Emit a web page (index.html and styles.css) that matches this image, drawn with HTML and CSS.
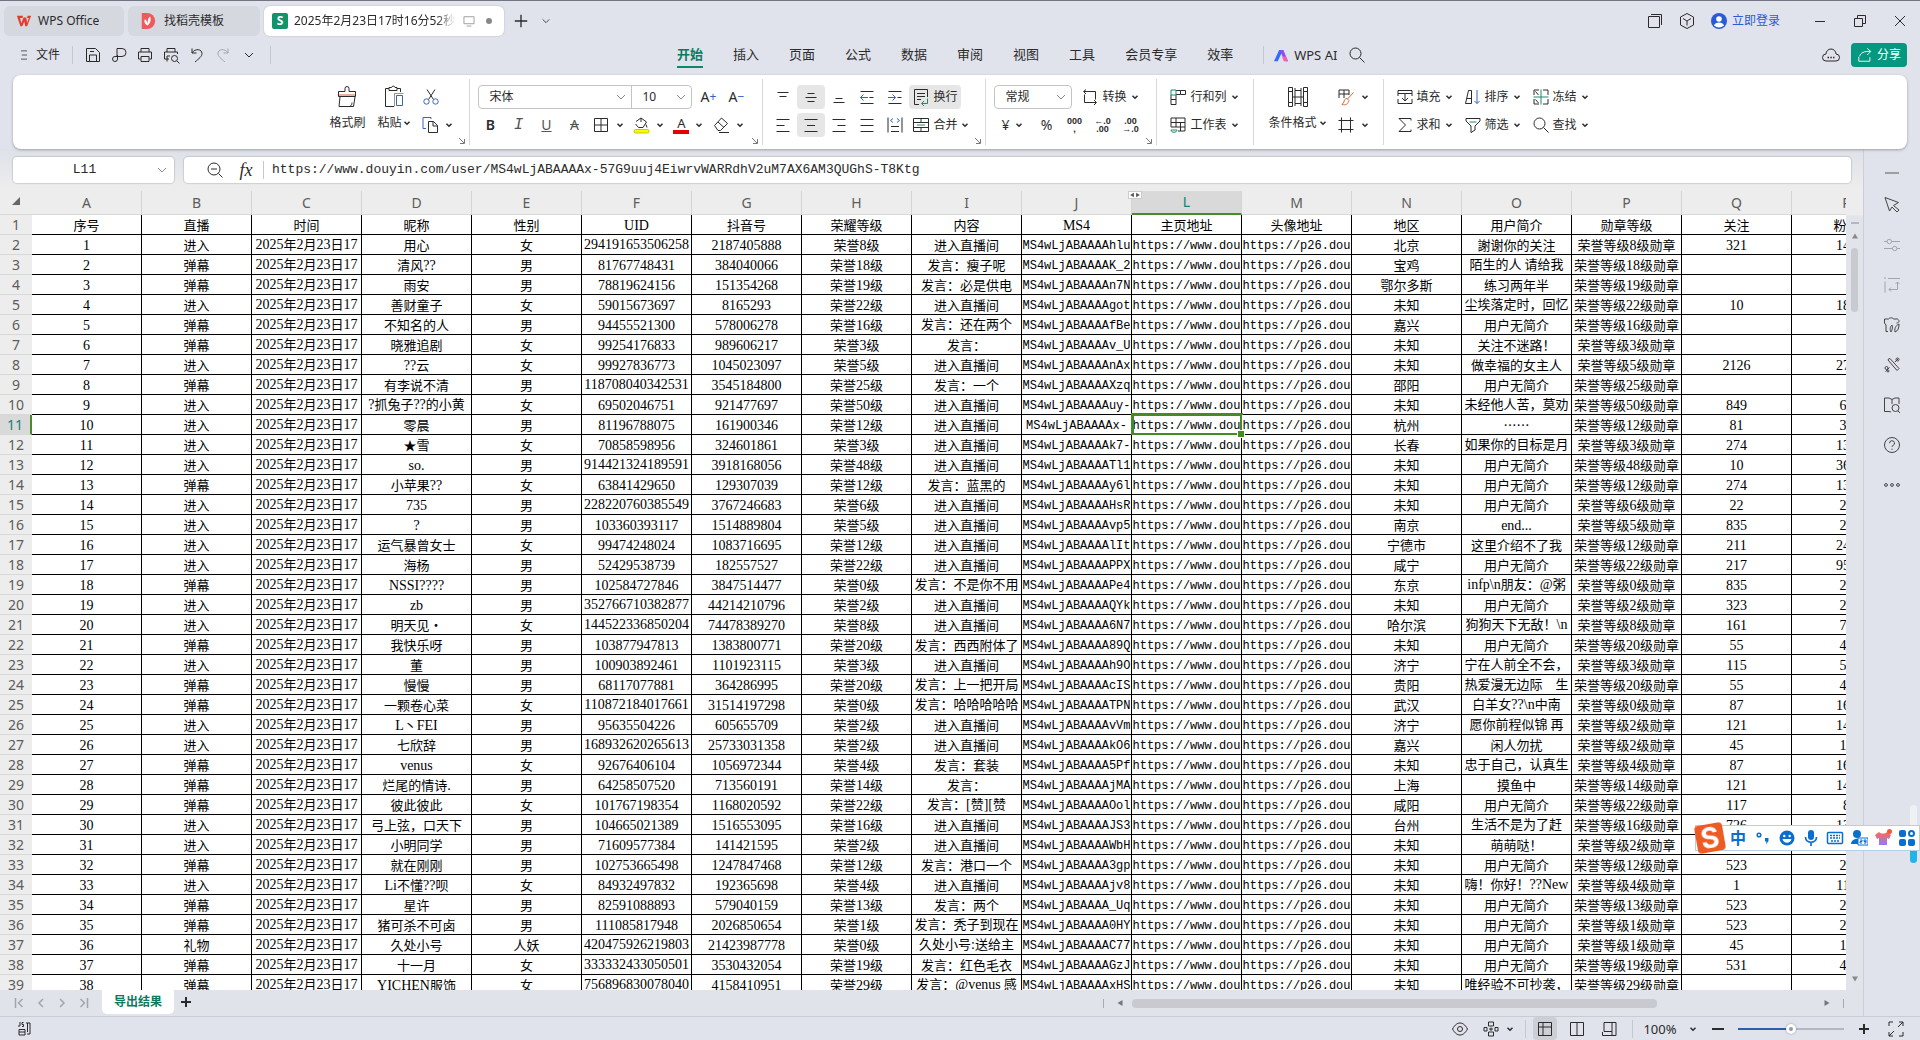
FILE: index.html
```html
<!DOCTYPE html>
<html lang="zh-CN">
  <head>
    <meta charset="UTF-8" />
    <meta name="viewport" content="width=device-width, initial-scale=1.0" />
    <title>WPS Office</title>
    <link rel="stylesheet" href="styles.css">
  </head>
  <body>
    <!-- 图标库 -->
    <svg class="sprite" xmlns="http://www.w3.org/2000/svg">
      <symbol id="caret" viewBox="0 0 8 8"><path d="M1.5 2.8 4 5.2 6.5 2.8" stroke-width="1.5" /></symbol>
      <symbol id="chevron" viewBox="0 0 12 12"><path d="M2 4l4 4 4-4" /></symbol>
      <symbol id="menu" viewBox="0 0 12 16"><path d="M2 2.500h8M3 8h7M2 13.500h8" /></symbol>
      <symbol id="save" viewBox="0 0 18 18"><path d="M2.500 2.500h9l4 4v9h-13zM5.500 15v-6h7v6M6 5.500h4" /></symbol>
      <symbol id="pdf" viewBox="0 0 18 18"><path d="M7 11V2.500h5a4 4 0 0 1 0 8H5a2.500 2.500 0 1 0 2.500 2.500V9" /></symbol>
      <symbol id="print" viewBox="0 0 18 18"><path d="M5 6V2.500h8V6M4.500 13h-2V6h13v7h-2M5 10.500h8v5H5z" /></symbol>
      <symbol id="preview" viewBox="0 0 18 18"><path d="M5 6V2.500h8V6M7 13H2.500V6h13v2M5 15.500V10h3M15 15l2.500 2.500" /><circle cx="12.500" cy="12.500" r="3" /></symbol>
      <symbol id="undo" viewBox="0 0 18 18"><path d="M4 2.500V7h4.500M4 7c3-5 10-4 10 .5 0 3-3 5-7 8.500" /></symbol>
      <symbol id="redo" viewBox="0 0 18 18"><path d="M14 2.500V7H9.500M14 7C11 2 4 3 4 7.500c0 3 3 5 7 8.500" /></symbol>
      <symbol id="search" viewBox="0 0 18 18"><circle cx="7.500" cy="7.500" r="5.500" /><path d="M11.500 11.500l5 5" /></symbol>
      <symbol id="zoomout" viewBox="0 0 18 18"><circle cx="8" cy="8" r="6" /><path d="M5 8h6M12.500 12.500l4 4" /></symbol>
      <symbol id="brush" viewBox="0 0 24 24"><path d="M3.500 6.500v5h17v-5H14V3.500a2 2 0 0 0-4 0v3zM5 12l-1 9.500h14.500L20 12M15 21.500c1.500-1 2-2.500 2-4" /><path class="warm" d="M4 10h16" /></symbol>
      <symbol id="paste" viewBox="0 0 24 24"><path d="M7 3.500H3.500v18H12M15 3.500h3.500V7M7 5.500v-3h2.500a1.800 1.800 0 0 1 3.500 0H15v3z" /><path class="blue" d="M14.500 10.500h6v10h-6z" /><path d="M12.500 21.500v-13h9" opacity=".5" /></symbol>
      <symbol id="cut" viewBox="0 0 18 18"><path d="M5 1.500l6.500 10M13 1.500l-6.500 10" /><circle class="blue" cx="4.500" cy="13.500" r="2.700" /><circle class="blue" cx="13.500" cy="13.500" r="2.700" /></symbol>
      <symbol id="copy" viewBox="0 0 18 18"><path class="blue" d="M5 12.500H2v-11h8V3" /><path d="M7.500 5.500h5l4 4v7h-9zM12 5.500V10h4.500" /></symbol>
      <symbol id="borders" viewBox="0 0 18 18"><path d="M2.500 2.500h13v13h-13zM9 2.500v13M2.500 9h13" /></symbol>
      <symbol id="fill" viewBox="0 0 18 18"><path d="M4 5.500 9 2l5.500 4-3.500 5.500H6.500L3.500 8M9 2v4" /><path d="M14 8.500l1 3" /><rect x="2" y="13.500" width="15" height="3.500" rx="1.500" fill="#fbfb00" stroke="#b9b900" stroke-width=".8" /></symbol>
      <symbol id="eraser" viewBox="0 0 18 18"><path d="M2.500 9.500 9.500 2l6 5.500-7 7H6zM6 6l6 5.500M7 16.500h10" /></symbol>
      <symbol id="al-top" viewBox="0 0 18 18"><path d="M3.500 4.500h11M5.500 8.500h7" /></symbol>
      <symbol id="al-mid" viewBox="0 0 18 18"><path d="M5.500 5.500h7M3.500 9.500h11M5.500 13.500h7" /></symbol>
      <symbol id="al-bot" viewBox="0 0 18 18"><path d="M5.500 10.500h7M3.500 14.500h11" /></symbol>
      <symbol id="outdent" viewBox="0 0 18 18"><path d="M2.500 3.500h13M11.500 9.500h4M2.500 15.500h13" /><path class="blue" d="M10 9.500H2.500M5.500 6.500l-3 3 3 3" /></symbol>
      <symbol id="indent" viewBox="0 0 18 18"><path d="M2.500 3.500h13M11.500 9.500h4M2.500 15.500h13" /><path class="blue" d="M2 9.500h7.500M6.500 6.500l3 3-3 3" /></symbol>
      <symbol id="wrap" viewBox="0 0 18 18"><path d="M7 16.500H2.500v-15h13V9M5 5.500h8M5 8.500h8M5 11.500h4" /><path class="green" d="M15.500 10.500v5H10M12 13l-2.500 2.500L12 18" /></symbol>
      <symbol id="al-left" viewBox="0 0 18 18"><path d="M2.500 3.500h13M2.500 9.500h8M2.500 15.500h13" /></symbol>
      <symbol id="al-center" viewBox="0 0 18 18"><path d="M2.500 3.500h13M5 9.500h8M2.500 15.500h13" /></symbol>
      <symbol id="al-right" viewBox="0 0 18 18"><path d="M2.500 3.500h13M7.500 9.500h8M2.500 15.500h13" /></symbol>
      <symbol id="al-full" viewBox="0 0 18 18"><path d="M2.500 3.500h13M2.500 9.500h13M2.500 15.500h13" /></symbol>
      <symbol id="distribute" viewBox="0 0 18 18"><path d="M2 1.500v15M16 1.500v15M5 10.500h8M5 15.500h8" /><path class="blue" d="M7 2.500l-2.500 2L7 6.500M11 2.500l2.500 2-2.500 2" /></symbol>
      <symbol id="merge" viewBox="0 0 18 18"><path d="M1.500 2.500h15v13h-15zM1.500 6.500h15M1.500 11.500h15M9 2.500v4M9 11.500v4" /><path class="green" d="M5 9h8" /></symbol>
      <symbol id="convert" viewBox="0 0 18 18"><path d="M5 1.500 2.500 3.500 5 6M3 3.500h11.500v8M13 17l2.500-2.500L13 12M15 14.500H3.500v-8" /></symbol>
      <symbol id="rowcol" viewBox="0 0 18 18"><path d="M7 2.500h4.500v4H7M11.500 2.500h5v4h-5M2 7v9.500h5V7M2 11.500h5" /><path class="green" d="M2 2h5v5H2z" /></symbol>
      <symbol id="sheet" viewBox="0 0 18 18"><path d="M2 11V2h14v13H9M2 6.500h14M7 2v9M11.500 6.500V15M2 11h14" /><path class="green" d="M2 14h6c0 3-6 3-6 0z" /></symbol>
      <symbol id="condfmt" viewBox="0 0 24 24"><path d="M2.500 2.500h4v4h-4zM2.500 6.500h4v11h-4zM2.500 17.500h4v4h-4zM17.500 2.500h4v4h-4zM17.500 6.500h4v11h-4zM17.500 17.500h4v4h-4zM9 3v18M15 3v18M9 5.500h6M9 12h6M9 18.500h6M6.500 12H9M15 12h2.500" /></symbol>
      <symbol id="cellstyle" viewBox="0 0 18 18"><path d="M2 10V2h10v5M7 2v8M2 6h10" /><path class="warm" d="M16.500 4.500l-6 6.500M10 10.500c-2 0-3 2-3 3.500L5 16.500c4 1 6-.5 7-4z" /></symbol>
      <symbol id="cell" viewBox="0 0 18 18"><path d="M4.500 1.500v15M13.500 1.500v15M1.500 4.500h15M1.500 13.500h15" /></symbol>
      <symbol id="fillin" viewBox="0 0 18 18"><path d="M2 8V2.500h14V8M2 5.500h14M2 11v4.500h14V11M9 5.500v7M6 10l3 3 3-3" /></symbol>
      <symbol id="sort" viewBox="0 0 18 18"><path d="M1.500 15.500 4.500 2.500h3v13h-6M3 10.500h4" /><path class="blue" d="M13 2v13.500M10.500 13l2.500 2.500 2.500-2.500" /></symbol>
      <symbol id="freeze" viewBox="0 0 18 18"><path d="M2 7V2h5M11 2h5v5M2 11v5h5M11 16h5v-5M3.500 3.500 6.500 7M3.500 11.500l3 3.500" /><path class="green" d="M9 1.500v15M1.500 9h15" /></symbol>
      <symbol id="sum" viewBox="0 0 18 18"><path d="M15 4.500v-2H3L9.500 9 3 15.500h12v-2" /></symbol>
      <symbol id="filter" viewBox="0 0 18 18"><path d="M2 2.500h14v2.500l-5 5v4l-4 2.500V10L2 5z" /><path class="green" d="M5.500 6h7" /></symbol>
      <symbol id="launch" viewBox="0 0 8 8"><path d="M1 1l5 5M6.500 2v4.500H2" /></symbol>
      <symbol id="windows" viewBox="0 0 18 18"><path d="M2.500 4.500h11v11h-11zM5 2.500h10.500V13" /></symbol>
      <symbol id="cube" viewBox="0 0 18 18"><path d="M9 1.500l6.500 3.500v8L9 16.500 2.500 13V5zM5 6.500 9 9l4-2.500M9 9v4.500" /></symbol>
      <symbol id="cloud" viewBox="0 0 18 18"><path d="M4 15a3.500 3.500 0 0 1 0-7 5 5 0 0 1 10 0 3.500 3.500 0 0 1 0 7z" /><path d="M5.500 11.500H7M8.300 11.500h1.500M11 11.500h1.500" stroke-width="1.500" /></symbol>
      <symbol id="share" viewBox="0 0 18 18"><path d="M2 11v5h12.500v-4.500M3 10.500C4 6.500 8 4.500 15 5M11.500 1.500 15.500 5l-4 4" /></symbol>
      <symbol id="pointer" viewBox="0 0 18 18"><path d="M2 1.500l13.500 5-5 3L16 14l-2 2-5-5-2.500 4z" /></symbol>
      <symbol id="sliders" viewBox="0 0 18 18"><path d="M1 5.500h3M8.500 5.500H17M1 12.500h8.500M14 12.500h3" /><circle cx="6.300" cy="5.500" r="2.200" /><circle cx="11.700" cy="12.500" r="2.200" /></symbol>
      <symbol id="resize" viewBox="0 0 18 18"><path d="M2 1v2M2 5.500v11M5 2.500h12M14.500 6v7.500H6M12.500 8l2-2 2 2M8 11.500l-2 2 2 2" /></symbol>
      <symbol id="gallery" viewBox="0 0 18 18"><path d="M5 15.500H3V9L1.500 7V3h4M5.500 3c1.500-2 5-1 5 0h4c3 2 1 4-1 4M8 16c-2-4 0-6 1-7 1 3 0 5-1 7zM12 16c-1-5 2-7 4-8 0 4-1 7-4 8z" /></symbol>
      <symbol id="tools" viewBox="0 0 18 18"><path d="M5 4l9 10.500 2-2L7 2.500a2 2 0 0 0-2 1.500zM2.500 15.500l4-4M12 6l3-3" /><circle cx="3.500" cy="12" r="1.500" /><circle cx="14.500" cy="3.500" r="1.500" /><circle cx="5" cy="15" r="1" /></symbol>
      <symbol id="book" viewBox="0 0 18 18"><path d="M9 3.500 6 2H1.500v13.500H6L8 16M9 3.500 12 2h4v6M9 3.500V8M15 15l2 2" /><circle cx="12.500" cy="12" r="3.500" /></symbol>
      <symbol id="help" viewBox="0 0 18 18"><circle cx="9" cy="9" r="7.500" /><path d="M6.500 7.200a2.500 2.500 0 1 1 3.500 2.300c-.8.4-1 .8-1 1.500M9 12.700v1.200" /></symbol>
      <symbol id="more" viewBox="0 0 18 18"><circle cx="3" cy="9" r="1.400" /><circle cx="9" cy="9" r="1.400" /><circle cx="15" cy="9" r="1.400" /></symbol>
      <symbol id="js" viewBox="0 0 18 18"><path d="M5 2v4H3M8.500 2.500H7v2h1.500v2H7M11 3h4v11h-3M12.500 3v9M4 15V9.500h6V15zM4 12h6" /></symbol>
      <symbol id="eye" viewBox="0 0 18 18"><path d="M1.500 9C4 4.500 6.500 3 9 3s5 1.500 7.500 6C14 13.500 11.500 15 9 15S4 13.500 1.500 9z" /><circle cx="9" cy="9" r="2.500" /></symbol>
      <symbol id="move" viewBox="0 0 18 18"><path d="M6.500 2h5v4h-5zM6.500 12h5v4h-5zM2 7.500h3v3.500H2zM13 7.500h3v3.500h-3zM7 9h4M9 7.500v3.500" /></symbol>
      <symbol id="v-normal" viewBox="0 0 18 18"><path d="M2.500 2.500h13v13h-13zM2.500 7h13M7 2.500v13" /></symbol>
      <symbol id="v-page" viewBox="0 0 18 18"><path d="M2.500 2.500h13v13h-13zM9 2.500v13" /></symbol>
      <symbol id="v-break" viewBox="0 0 18 18"><path d="M4 2.500h12v13H2.500V12M4 2.500v9h8v-9M12 11.500V15" /></symbol>
      <symbol id="expand" viewBox="0 0 18 18"><path d="M2 6V2h4M12 2h4v4M16 12v4h-4M6 16H2v-4M16 2l-5 5M2 16l5-5" /></symbol>
      <symbol id="tri" viewBox="0 0 8 8"><path d="M1 6.500h6L4 1.500z" fill="currentColor" stroke="none" /></symbol>
    </svg>

    <header class="titlebar">
      <div class="tabs">
        <button class="tab tab-home">
          <svg class="logo" viewBox="0 0 18 16"><path d="M1 2h7l-.6 2.500H4.500L6 10.500 8.500 4h3l1 6L14.500 4.500h-2L13 2h4l-4.500 12h-2L9.300 8.500 7 14H5z" fill="#e8392b" /></svg>
          WPS Office
        </button>
        <button class="tab tab-docer">
          <svg class="logo" viewBox="0 0 18 18"><path d="M2 0h6a9 9 0 0 1 0 18H2z" fill="#ee5a5c" /><path d="M8.500 14C4 12 5 8 5.500 7c2 1 2.500 3 3 5 0-4 1-7 3-8 1 3 .5 8-3 10z" fill="#fff" /></svg>
          找稻壳模板
        </button>
        <button class="tab tab-doc">
          <span class="sheet-logo">S</span>
          <span class="doc-name">2025年2月23日17时16分52秒</span>
          <svg class="icon screen" viewBox="0 0 18 18"><path d="M2.500 3.500h13v9h-13zM6 15.500h6" /></svg>
          <span class="dot"></span>
        </button>
        <button class="ibtn new-tab" aria-label="新建"><svg class="icon" viewBox="0 0 18 18"><path d="M9 2v14M2 9h14" stroke-width="1.500" /></svg></button>
        <button class="ibtn" aria-label="标签列表"><svg class="icon s10"><use href="#chevron" /></svg></button>
      </div>
      <div class="win-tools">
        <button class="ibtn w32" aria-label="窗口"><svg class="icon"><use href="#windows" /></svg></button>
        <button class="ibtn w32" aria-label="应用"><svg class="icon"><use href="#cube" /></svg></button>
        <a class="login" href="#"><svg class="avatar" viewBox="0 0 16 16"><circle cx="8" cy="8" r="8" fill="#2a5bd7" /><circle cx="8" cy="6" r="2.800" fill="#fff" /><path d="M3 12.500c1-4 9-4 10 0-3 2.500-7 2.500-10 0z" fill="#fff" /></svg>立即登录</a>
        <button class="ibtn w40" aria-label="最小化"><svg class="icon" viewBox="0 0 18 18"><path d="M4 9.500h10" /></svg></button>
        <button class="ibtn w40" aria-label="还原"><svg class="icon" viewBox="0 0 18 18"><path d="M3.500 6.500h8v8h-8zM6.500 6V3.500h8v8H12" /></svg></button>
        <button class="ibtn w40" aria-label="关闭"><svg class="icon" viewBox="0 0 18 18"><path d="M4 4l10 10M14 4 4 14" /></svg></button>
      </div>
    </header>

    <nav class="menubar">
      <div class="quick">
        <button class="file"><svg class="icon s12"><use href="#menu" /></svg>文件</button>
        <i class="sep"></i>
        <button class="ibtn w26" aria-label="保存"><svg class="icon"><use href="#save" /></svg></button>
        <button class="ibtn w26" aria-label="输出PDF"><svg class="icon"><use href="#pdf" /></svg></button>
        <button class="ibtn w26" aria-label="打印"><svg class="icon"><use href="#print" /></svg></button>
        <button class="ibtn w26" aria-label="打印预览"><svg class="icon"><use href="#preview" /></svg></button>
        <button class="ibtn w26" aria-label="撤销"><svg class="icon"><use href="#undo" /></svg></button>
        <button class="ibtn w26 off" aria-label="恢复"><svg class="icon"><use href="#redo" /></svg></button>
        <button class="ibtn w26" aria-label="更多"><svg class="icon s12"><use href="#chevron" /></svg></button>
        <i class="sep"></i>
      </div>
      <div class="menus">
        <a class="active" href="#">开始</a>
        <a href="#">插入</a>
        <a href="#">页面</a>
        <a href="#">公式</a>
        <a href="#">数据</a>
        <a href="#">审阅</a>
        <a href="#">视图</a>
        <a href="#">工具</a>
        <a href="#">会员专享</a>
        <a href="#">效率</a>
        <i class="sep"></i>
      </div>
      <button class="ai"><svg class="ai-logo" viewBox="0 0 18 16"><path d="M1 14 6.500 2h4L5 14z" fill="#2f6bff" /><path d="M7 2h4l5 12h-3.500z" fill="#8a4dff" /><path d="M9.500 9h4l2 5h-4z" fill="#ff5fa8" /></svg>WPS AI</button>
      <button class="ibtn" aria-label="搜索"><svg class="icon"><use href="#search" /></svg></button>
      <div class="menu-right">
        <button class="ibtn" aria-label="云同步"><svg class="icon"><use href="#cloud" /></svg></button>
        <button class="share"><svg class="icon s16" viewBox="0 0 18 18"><use href="#share" /></svg>分享</button>
      </div>
    </nav>

    <section class="ribbon">
      <div class="group">
        <button class="big"><svg class="icon s24"><use href="#brush" /></svg><span>格式刷</span></button>
        <button class="big"><svg class="icon s24"><use href="#paste" /></svg><span>粘贴<svg class="icon s8"><use href="#caret" /></svg></span></button>
        <div class="rows">
          <div class="row"><button class="ibtn" aria-label="剪切"><svg class="icon"><use href="#cut" /></svg></button></div>
          <div class="row"><button class="drop" aria-label="复制"><svg class="icon"><use href="#copy" /></svg><svg class="icon s8"><use href="#caret" /></svg></button></div>
        </div>
        <svg class="icon launch"><use href="#launch" /></svg>
      </div>

      <div class="group">
        <div class="rows">
          <div class="row">
            <div class="combo">
              <div class="picker w152"><select aria-label="字体"><option>宋体</option></select><svg class="icon s12"><use href="#chevron" /></svg></div>
              <div class="picker w60"><select aria-label="字号"><option>10</option></select><svg class="icon s12"><use href="#chevron" /></svg></div>
            </div>
            <button class="ibtn size-btn" aria-label="增大字号">A<sup>+</sup></button>
            <button class="ibtn size-btn" aria-label="减小字号">A<sup>−</sup></button>
          </div>
          <div class="row">
            <button class="ibtn"><b>B</b></button>
            <button class="ibtn italic">I</button>
            <button class="ibtn"><u>U</u></button>
            <button class="ibtn"><s>A</s></button>
            <button class="drop" aria-label="边框"><svg class="icon"><use href="#borders" /></svg><svg class="icon s8"><use href="#caret" /></svg></button>
            <button class="drop" aria-label="填充颜色"><svg class="icon"><use href="#fill" /></svg><svg class="icon s8"><use href="#caret" /></svg></button>
            <button class="drop"><span class="font-color">A</span><svg class="icon s8"><use href="#caret" /></svg></button>
            <button class="drop" aria-label="清除"><svg class="icon"><use href="#eraser" /></svg><svg class="icon s8"><use href="#caret" /></svg></button>
          </div>
        </div>
        <svg class="icon launch"><use href="#launch" /></svg>
      </div>

      <div class="group">
        <div class="rows">
          <div class="row">
            <button class="ibtn" aria-label="顶端对齐"><svg class="icon"><use href="#al-top" /></svg></button>
            <button class="ibtn on" aria-label="垂直居中"><svg class="icon"><use href="#al-mid" /></svg></button>
            <button class="ibtn" aria-label="底端对齐"><svg class="icon"><use href="#al-bot" /></svg></button>
            <button class="ibtn" aria-label="减少缩进"><svg class="icon"><use href="#outdent" /></svg></button>
            <button class="ibtn" aria-label="增加缩进"><svg class="icon"><use href="#indent" /></svg></button>
            <button class="tool on"><svg class="icon"><use href="#wrap" /></svg>换行</button>
          </div>
          <div class="row">
            <button class="ibtn" aria-label="左对齐"><svg class="icon"><use href="#al-left" /></svg></button>
            <button class="ibtn on" aria-label="水平居中"><svg class="icon"><use href="#al-center" /></svg></button>
            <button class="ibtn" aria-label="右对齐"><svg class="icon"><use href="#al-right" /></svg></button>
            <button class="ibtn" aria-label="两端对齐"><svg class="icon"><use href="#al-full" /></svg></button>
            <button class="ibtn" aria-label="分散对齐"><svg class="icon"><use href="#distribute" /></svg></button>
            <button class="tool"><svg class="icon"><use href="#merge" /></svg>合并<svg class="icon s8"><use href="#caret" /></svg></button>
          </div>
        </div>
        <svg class="icon launch"><use href="#launch" /></svg>
      </div>

      <div class="group">
        <div class="rows">
          <div class="row">
            <div class="combo"><div class="picker w76"><select aria-label="数字格式"><option>常规</option></select><svg class="icon s12"><use href="#chevron" /></svg></div></div>
            <button class="tool convert"><svg class="icon"><use href="#convert" /></svg>转换<svg class="icon s8"><use href="#caret" /></svg></button>
          </div>
          <div class="row">
            <button class="drop yen">¥<svg class="icon s8"><use href="#caret" /></svg></button>
            <button class="ibtn percent">%</button>
            <button class="ibtn mini">000<br>,</button>
            <button class="ibtn mini">←.0<br>.00</button>
            <button class="ibtn mini">.00<br>→.0</button>
          </div>
        </div>
        <svg class="icon launch"><use href="#launch" /></svg>
      </div>

      <div class="group roomy">
        <div class="rows">
          <div class="row"><button class="tool"><svg class="icon"><use href="#rowcol" /></svg>行和列<svg class="icon s8"><use href="#caret" /></svg></button></div>
          <div class="row"><button class="tool"><svg class="icon"><use href="#sheet" /></svg>工作表<svg class="icon s8"><use href="#caret" /></svg></button></div>
        </div>
      </div>

      <div class="group roomy">
        <button class="big"><svg class="icon s24"><use href="#condfmt" /></svg><span>条件格式<svg class="icon s8"><use href="#caret" /></svg></span></button>
        <div class="rows">
          <div class="row"><button class="drop" aria-label="单元格样式"><svg class="icon"><use href="#cellstyle" /></svg><svg class="icon s8"><use href="#caret" /></svg></button></div>
          <div class="row"><button class="drop" aria-label="单元格"><svg class="icon"><use href="#cell" /></svg><svg class="icon s8"><use href="#caret" /></svg></button></div>
        </div>
      </div>

      <div class="group roomy">
        <div class="rows">
          <div class="row spaced">
            <button class="tool"><svg class="icon"><use href="#fillin" /></svg>填充<svg class="icon s8"><use href="#caret" /></svg></button>
            <button class="tool"><svg class="icon"><use href="#sort" /></svg>排序<svg class="icon s8"><use href="#caret" /></svg></button>
            <button class="tool"><svg class="icon"><use href="#freeze" /></svg>冻结<svg class="icon s8"><use href="#caret" /></svg></button>
          </div>
          <div class="row spaced">
            <button class="tool"><svg class="icon"><use href="#sum" /></svg>求和<svg class="icon s8"><use href="#caret" /></svg></button>
            <button class="tool"><svg class="icon"><use href="#filter" /></svg>筛选<svg class="icon s8"><use href="#caret" /></svg></button>
            <button class="tool"><svg class="icon"><use href="#search" /></svg>查找<svg class="icon s8"><use href="#caret" /></svg></button>
          </div>
        </div>
      </div>
    </section>

    <main class="main">
      <div class="workspace">
        <div class="formula-row">
          <div class="name-box">
            <input type="text" value="L11" aria-label="名称框" />
            <svg class="icon s12"><use href="#chevron" /></svg>
          </div>
          <div class="formula">
            <button class="ibtn" aria-label="缩小"><svg class="icon"><use href="#zoomout" /></svg></button>
            <button class="ibtn fx">fx</button>
            <i class="sep"></i>
            <input type="text" aria-label="编辑栏" value="https://www.douyin.com/user/MS4wLjABAAAAx-57G9uuj4EiwrvWARRdhV2uM7AX6AM3QUGhS-T8Ktg" />
          </div>
        </div>

        <div class="grid-area">
          <div class="grid-view">
            <table class="grid">
              <colgroup id="cols"></colgroup>
              <thead id="head"></thead>
              <tbody id="body"></tbody>
            </table>
          </div>
          <div class="vscroll">
            <i class="split"></i>
            <svg class="icon s8"><use href="#tri" /></svg>
            <i class="thumb"></i>
            <svg class="icon s8 down"><use href="#tri" /></svg>
          </div>
        </div>

        <div class="sheetbar">
          <div class="sheet-nav">
            <button aria-label="第一个"><svg class="icon s12" viewBox="0 0 12 12"><path d="M2.500 1v10M9.500 2l-4 4 4 4" stroke-width="1.500" /></svg></button>
            <button aria-label="上一个"><svg class="icon s12" viewBox="0 0 12 12"><path d="M8 2 4 6l4 4" stroke-width="1.500" /></svg></button>
            <button aria-label="下一个"><svg class="icon s12" viewBox="0 0 12 12"><path d="M4 2l4 4-4 4" stroke-width="1.500" /></svg></button>
            <button aria-label="最后一个"><svg class="icon s12" viewBox="0 0 12 12"><path d="M9.500 1v10M2.500 2l4 4-4 4" stroke-width="1.500" /></svg></button>
          </div>
          <button class="sheet-tab">导出结果</button>
          <button class="ibtn add-sheet" aria-label="新建工作表"><svg class="icon s12" viewBox="0 0 12 12"><path d="M6 1v10M1 6h10" stroke-width="2" /></svg></button>
          <div class="hscroll">
            <i class="grip"></i>
            <svg class="icon s8 left"><use href="#tri" /></svg>
            <div class="track"><i class="thumb"></i></div>
            <svg class="icon s8 right"><use href="#tri" /></svg>
            <i class="grip"></i>
          </div>
        </div>
      </div>

      <aside class="sidepanel">
        <button aria-label="收起"><svg class="icon"><path d="M2 9h14" stroke="#888" stroke-width="1.500" /></svg></button>
        <button aria-label="选择"><svg class="icon"><use href="#pointer" /></svg></button>
        <button class="off" aria-label="属性"><svg class="icon"><use href="#sliders" /></svg></button>
        <button class="off" aria-label="尺寸"><svg class="icon"><use href="#resize" /></svg></button>
        <button aria-label="素材"><svg class="icon"><use href="#gallery" /></svg></button>
        <button aria-label="工具"><svg class="icon"><use href="#tools" /></svg></button>
        <button aria-label="查阅"><svg class="icon"><use href="#book" /></svg></button>
        <button aria-label="帮助"><svg class="icon"><use href="#help" /></svg></button>
        <button aria-label="更多"><svg class="icon"><use href="#more" /></svg></button>
      </aside>
    </main>

    <footer class="statusbar">
      <button class="ibtn" aria-label="宏"><svg class="icon"><use href="#js" /></svg></button>
      <div class="status-right">
        <button class="ibtn" aria-label="护眼模式"><svg class="icon"><use href="#eye" /></svg></button>
        <button class="drop" aria-label="阅读模式"><svg class="icon"><use href="#move" /></svg><svg class="icon s8"><use href="#caret" /></svg></button>
        <i class="sep"></i>
        <button class="ibtn view on" aria-label="普通视图"><svg class="icon"><use href="#v-normal" /></svg></button>
        <button class="ibtn view" aria-label="页面布局"><svg class="icon"><use href="#v-page" /></svg></button>
        <button class="ibtn view" aria-label="分页预览"><svg class="icon"><use href="#v-break" /></svg></button>
        <i class="sep"></i>
        <button class="zoom-value">100%<svg class="icon s8"><use href="#caret" /></svg></button>
        <button class="ibtn" aria-label="缩小"><svg class="icon s12" viewBox="0 0 12 12"><path d="M0 6h12" stroke-width="2" /></svg></button>
        <input class="zoom-range" type="range" min="0" max="100" value="50" aria-label="缩放" />
        <button class="ibtn" aria-label="放大"><svg class="icon s12" viewBox="0 0 12 12"><path d="M6 1v10M1 6h10" stroke-width="2" /></svg></button>
        <button class="ibtn full" aria-label="全屏"><svg class="icon"><use href="#expand" /></svg></button>
      </div>
    </footer>

    <!-- 输入法悬浮条 -->
    <div class="edge-pill"></div>
    <div class="ime">
      <span class="ime-logo">S</span>
      <span class="ime-zh">中</span>
      <svg viewBox="0 0 18 18"><circle cx="5" cy="6" r="1.800" fill="none" stroke="#0a6ed1" stroke-width="1.500" /><path d="M11 9h3.500v3L12 15.500l.5-3H11z" fill="#0a6ed1" /></svg>
      <svg viewBox="0 0 18 18"><circle cx="9" cy="9" r="7.500" fill="#0a6ed1" /><circle cx="6.300" cy="7" r="1.200" fill="#fff" /><circle cx="11.700" cy="7" r="1.200" fill="#fff" /><path d="M4.500 10h9c-1 5-8 5-9 0z" fill="#fff" /></svg>
      <svg viewBox="0 0 18 18"><rect x="6" y="1" width="6" height="10" rx="3" fill="#0a6ed1" /><path d="M3.500 8c0 7 11 7 11 0M9 13v4" fill="none" stroke="#0a6ed1" stroke-width="1.700" /></svg>
      <svg viewBox="0 0 18 18"><rect x="1.500" y="3.500" width="15" height="11" rx="1" fill="none" stroke="#0a6ed1" stroke-width="1.500" /><path d="M4 6.500h10M4 9h10M5 12h8" stroke="#0a6ed1" stroke-width="1.500" stroke-dasharray="2 1" /></svg>
      <svg viewBox="0 0 18 18"><circle cx="7" cy="5" r="4" fill="#0a6ed1" /><path d="M1 15c0-6 11-7 12-2v2z" fill="#0a6ed1" /><path d="M8 9h10v7H8z" fill="#fff" stroke="#0a6ed1" /><path d="M10 11h2v1.500h-2V14h2M14 14h2v-3h-2v1.500h2" fill="none" stroke="#0a6ed1" /></svg>
      <svg viewBox="0 0 18 18"><defs><linearGradient id="shirt" x2="0" y2="1"><stop offset="0" stop-color="#ff6a4d" /><stop offset="1" stop-color="#8f7bff" /></linearGradient></defs><path d="M1 6l4-3c2 2 6 2 8 0l4 3-2 4-2-1v7H5V9L3 10z" fill="url(#shirt)" /><circle cx="15.500" cy="2.500" r="2.500" fill="#f5553d" /></svg>
      <svg viewBox="0 0 18 18"><g fill="#0a6ed1"><rect x="1" y="1" width="7" height="7" rx="2" /><rect x="1" y="10" width="7" height="7" rx="2" /><rect x="10" y="10" width="7" height="7" rx="2" /></g><circle cx="13.500" cy="4.500" r="2.500" fill="none" stroke="#0a6ed1" stroke-width="2" /></svg>
    </div>

    <script src="script.js"></script>
  </body>
</html>
```
FILE: styles.css
```css
* {
  box-sizing: border-box;
}

body {
  margin: 0;
  height: 100vh;
  display: flex;
  flex-direction: column;
  overflow: hidden;
  border-top: 1px solid #747482;
  font-family: "Noto Sans", "Noto Sans CJK SC", sans-serif;
  font-size: 12px;
  line-height: 16px;
  color: #2b2b2b;
  background-color: #e1e3ec;
}

button {
  display: flex;
  align-items: center;
  justify-content: center;
  margin: 0;
  padding: 0;
  border: none;
  background: none;
  color: inherit;
  font: inherit;
  white-space: nowrap;
  cursor: pointer;
}

input,
select {
  border: none;
  outline: none;
  background: none;
  font: inherit;
  color: inherit;
}

a {
  color: inherit;
  text-decoration: none;
}

/* 图标 */
.sprite {
  display: none;
}

.icon {
  width: 18px;
  height: 18px;
  flex: none;
  fill: none;
  stroke: currentColor;
}

.icon.s8 {
  width: 8px;
  height: 8px;
}

.icon.s10 {
  width: 10px;
  height: 10px;
}

.icon.s12 {
  width: 12px;
  height: 12px;
}

.icon.s16 {
  width: 16px;
  height: 16px;
}

.icon.s24 {
  width: 24px;
  height: 24px;
}

.blue {
  stroke: #3a62c4;
}

.green {
  stroke: #1f8a6d;
}

.warm {
  stroke: #d0693a;
}

.ibtn {
  width: 28px;
  height: 24px;
  border-radius: 4px;
}

.w26 {
  width: 26px;
}

.w32 {
  width: 32px;
}

.w40 {
  width: 40px;
}

.on {
  background-color: #e6e6e6;
}

.off {
  color: #a3a5ad;
}

.sep {
  width: 1px;
  height: 18px;
  background-color: #c6c8d0;
}

/* 标题栏 */
.titlebar {
  flex: none;
  height: 39px;
  display: flex;
  justify-content: space-between;
  align-items: center;
}

.tabs {
  display: flex;
  align-items: center;
  gap: 4px;
  padding: 0 4px;
}

.tab {
  height: 30px;
  padding: 0 12px;
  justify-content: flex-start;
  gap: 6px;
  border-radius: 6px;
  background-color: #d5d8df;
}

.tab-home {
  width: 120px;
}

.tab-docer {
  width: 132px;
  gap: 8px;
}

.tab-doc {
  width: 240px;
  padding: 0 8px;
  background-color: #fff;
  box-shadow: 0 0 2px rgba(0, 0, 0, 0.2);
}

.logo {
  width: 16px;
  height: 16px;
}

.sheet-logo {
  width: 16px;
  border-radius: 2px;
  background-color: #12936a;
  color: #fff;
  font-weight: bold;
  flex: none;
}

.doc-name {
  flex: 1;
  overflow: hidden;
  text-align: left;
  -webkit-mask-image: linear-gradient(to right, #000 88%, transparent);
  mask-image: linear-gradient(to right, #000 88%, transparent);
}

.screen {
  width: 14px;
  height: 14px;
  color: #888;
}

.dot {
  width: 6px;
  height: 6px;
  margin: 0 4px;
  border-radius: 50%;
  background-color: #888;
}

.tabs .ibtn {
  width: 16px;
}

.tabs .new-tab {
  width: 26px;
}

.new-tab .icon {
  width: 16px;
  height: 16px;
}

.win-tools {
  display: flex;
  align-items: center;
}

.login {
  display: flex;
  align-items: center;
  gap: 5px;
  margin: 0 20px 0 8px;
  color: #2a5bd7;
}

.avatar {
  width: 16px;
  height: 16px;
}

/* 菜单栏 */
.menubar {
  flex: none;
  height: 30px;
  display: flex;
  align-items: center;
}

.quick {
  flex: 0 0 35%;
  display: flex;
  align-items: center;
  padding-left: 18px;
}

.file {
  gap: 6px;
  margin-right: 12px;
}

.quick .sep + .ibtn {
  margin-left: 7px;
}

.quick .ibtn + .sep {
  margin-left: 8px;
}

.menus {
  display: flex;
  align-items: center;
  gap: 30px;
  margin-left: 5px;
  font-size: 13px;
}

.menus a {
  height: 26px;
  padding-top: 4px;
  border-bottom: 2px solid transparent;
}

.menus .active {
  color: #0b7a5f;
  font-weight: bold;
  border-color: #0b8a6b;
}

.ai {
  gap: 4px;
  margin: 0 6px 0 9px;
  font-size: 13px;
}

.ai-logo {
  width: 17px;
  height: 15px;
}

.menu-right {
  flex: 1;
  display: flex;
  align-items: center;
  justify-content: flex-end;
  gap: 6px;
  padding-right: 13px;
}

.share {
  width: 56px;
  height: 24px;
  gap: 4px;
  border-radius: 4px;
  background-color: #069780;
  color: #fff;
}

/* 功能区 */
.ribbon {
  flex: none;
  display: flex;
  justify-content: center;
  margin: 5px 13px 0;
  padding: 4px 0;
  border-radius: 8px;
  background-color: #fff;
  box-shadow: 0 1px 3px rgba(0, 0, 0, 0.3);
  position: relative;
  z-index: 1;
}

.group {
  display: flex;
  height: 66px;
  padding: 4px 0 0 6px;
  border-right: 1px solid #d9d9d9;
}

.group.roomy {
  padding: 4px 10px 0 9px;
}

.group:last-child {
  border-right: none;
}

.rows {
  display: flex;
  flex-direction: column;
}

.row {
  display: flex;
  align-items: center;
  height: 28px;
}

.row.spaced {
  gap: 4px;
}

.big {
  flex-direction: column;
  justify-content: flex-start;
  height: 56px;
  padding: 2px 6px 0;
  gap: 6px;
}

.big span {
  display: flex;
  align-items: center;
  gap: 2px;
}

.drop {
  width: 40px;
  height: 24px;
  gap: 6px;
}

.tool {
  height: 24px;
  padding: 0 4px 0 3px;
  gap: 3px;
  border-radius: 4px;
}

.tool .s8 {
  margin: 0 0 0 1px;
}

.convert {
  margin-left: 4px;
}

.launch {
  align-self: flex-end;
  width: 8px;
  height: 8px;
  margin: 0 3px 0 1px;
  color: #777;
}

.combo {
  display: flex;
  height: 24px;
  margin: 0 2px;
  border: 1px solid #c4c4c4;
  border-radius: 4px;
}

.picker {
  display: flex;
  align-items: center;
  position: relative;
}

.picker + .picker {
  border-left: 1px solid #c4c4c4;
}

.picker select {
  width: 100%;
  height: 22px;
  padding: 0 10px;
  appearance: none;
}

.picker .icon {
  position: absolute;
  right: 4px;
  color: #888;
  pointer-events: none;
}

.w152 {
  width: 152px;
}

.w60 {
  width: 60px;
}

.w76 {
  width: 76px;
}

.size-btn,
.row u,
.row s,
.row b,
.percent,
.yen {
  font-size: 14px;
}

.row u,
.row s {
  color: #555;
}

.row b {
  font-weight: 600;
}

.size-btn sup {
  color: #3a62c4;
  font-size: 12px;
  line-height: 8px;
}

.italic {
  font-family: "Liberation Mono", monospace;
  font-size: 16px;
  font-style: italic;
  color: #555;
}

.font-color {
  width: 16px;
  font-size: 13px;
  line-height: 14px;
  border-bottom: 4px solid #e60000;
}

.mini {
  font-family: "Liberation Sans", sans-serif;
  font-size: 9px;
  font-weight: bold;
  line-height: 8px;
}

/* 工作区 */
.main {
  flex: 1;
  min-height: 0;
  display: flex;
}

.workspace {
  flex: 1;
  min-width: 0;
  display: flex;
  flex-direction: column;
  background-image: linear-gradient(#dfe1ea, #ededed 40px, #ededed 66px, #e2e4eb 67px);
}

.formula-row {
  flex: none;
  display: flex;
  gap: 10px;
  padding: 8px 12px 8px 13px;
  font-family: "Liberation Mono", "Noto Sans CJK SC", monospace;
  font-size: 13px;
}

.name-box,
.formula {
  display: flex;
  align-items: center;
  height: 26px;
  border-radius: 4px;
  background-color: #fff;
  box-shadow: 0 0 1px 1px rgba(0, 0, 0, 0.12);
}

.name-box {
  flex: 0 0 161px;
  padding-right: 6px;
}

.name-box input {
  width: 100%;
  min-width: 0;
  text-align: center;
}

.name-box .icon {
  color: #888;
}

.formula {
  flex: 1;
  padding-left: 17px;
}

.formula input {
  flex: 1;
  padding: 0 0 0 8px;
}

.fx {
  width: 34px;
  font-family: "Liberation Serif", serif;
  font-size: 18px;
  font-style: italic;
}

.grid-area {
  flex: 1;
  min-height: 0;
  display: flex;
}

.grid-view {
  flex: 1;
  min-width: 0;
  overflow: hidden;
}

.grid {
  width: 1902px;
  table-layout: fixed;
  border-spacing: 0;
  text-align: center;
  font-family: "Noto Sans CJK SC", sans-serif;
  font-size: 13px;
  color: #000;
}

.grid th {
  position: relative;
  padding: 0;
  font-family: "Noto Sans", sans-serif;
  font-size: 14px;
  font-weight: normal;
  color: #5c5c5c;
  background-color: #ededed;
  border-bottom: 1px solid #d8d8d8;
}

.grid thead th {
  height: 24px;
  border-right: 1px solid #d4d4d4;
}

.grid thead th:first-child {
  border-right: none;
}

.grid td {
  position: relative;
  padding: 0;
  height: 20px;
  background-color: #fff;
  border-right: 1px solid #000;
  border-bottom: 1px solid #000;
}

.cell {
  height: 19px;
  line-height: 20px;
  overflow: hidden;
  white-space: nowrap;
}

/* 自动换行的单元格只露出第一行 */
.cell.wrap {
  line-height: 18px;
}

.en {
  font-family: "Liberation Serif", serif;
  font-size: 14px;
}

.code .en {
  font-family: "Liberation Mono", monospace;
  font-size: 12px;
}

.grid .corner::after {
  content: "";
  position: absolute;
  right: 12px;
  bottom: 9px;
  border-left: 8px solid transparent;
  border-bottom: 8px solid #666;
}

.grid .col-on {
  color: #15807a;
  background-color: #d9d9d9;
  border-bottom: 2px solid #4b8a2c;
}

.grid .row-on {
  color: #15807a;
  background-color: #d9d9d9;
  border-right: 2px solid #4b8a2c;
}

.selected::after {
  content: "";
  position: absolute;
  inset: -2px -2px -2px -1px;
  border: 3px solid #468a28;
}

.selected::before {
  content: "";
  position: absolute;
  right: -4px;
  bottom: -4px;
  width: 6px;
  height: 6px;
  background-color: #468a28;
  border: 1px solid #fff;
  z-index: 1;
}

.hidden-col {
  position: absolute;
  left: -4px;
  top: 0;
  display: flex;
  background-color: #fff;
  border: 1px solid #ccc;
  color: #555;
  z-index: 1;
}

.hidden-col .icon {
  width: 6px;
  height: 6px;
  margin: 0;
}

.vscroll {
  flex: 0 0 17px;
  display: flex;
  flex-direction: column;
  align-items: center;
  gap: 8px;
  margin-top: 24px;
  padding: 7px 0;
  color: #888;
}

.vscroll .split {
  width: 8px;
  height: 2px;
  background-color: #b5b7bf;
}

.vscroll .thumb {
  width: 7px;
  height: 64px;
  border-radius: 4px;
  background-color: #c8cad0;
}

.down {
  margin-top: auto;
  transform: rotate(180deg);
}

.left {
  transform: rotate(-90deg);
}

.right {
  transform: rotate(90deg);
}

/* 工作表标签 */
.sheetbar {
  flex: none;
  height: 26px;
  display: flex;
  background-color: #e1e3ea;
}

.sheet-nav {
  display: flex;
  width: 102px;
  padding: 0 7px 0 8px;
  color: #a3a5ad;
}

.sheet-nav button {
  flex: 1;
}

.sheet-tab {
  height: 24px;
  padding: 0 12px;
  border-radius: 0 0 5px 5px;
  background-color: #fff;
  color: #0b7a5f;
  font-weight: bold;
}

.add-sheet {
  width: 24px;
}

.hscroll {
  flex: 0 0 741px;
  display: flex;
  align-items: center;
  margin: 0 19px 0 auto;
  color: #777;
}

.hscroll .grip {
  width: 1px;
  height: 9px;
  background-color: #aaa;
}

.hscroll .left {
  margin: 0 8px 0 12px;
}

.hscroll .right {
  margin-right: 12px;
}

.track {
  flex: 1;
}

.track .thumb {
  display: block;
  width: 76%;
  height: 9px;
  border-radius: 4px;
  background-color: #c8cad0;
}

/* 右侧面板 */
.sidepanel {
  flex: 0 0 57px;
  display: flex;
  flex-direction: column;
  align-items: center;
  gap: 16px;
  padding: 12px 0;
  border-left: 1px solid #cdcfd8;
  color: #444;
}

.sidepanel button {
  width: 28px;
  height: 24px;
}

.sidepanel .off {
  color: #a3a5ad;
}

.sidepanel button:first-child {
  margin-bottom: -8px;
}

/* 状态栏 */
.statusbar {
  flex: none;
  height: 24px;
  display: flex;
  align-items: center;
  justify-content: space-between;
  padding: 0 10px;
  border-top: 1px solid #c9cbd4;
}

.statusbar .ibtn,
.statusbar .drop {
  height: 23px;
}

.status-right {
  display: flex;
  align-items: center;
  gap: 4px;
}

.status-right .sep {
  margin: 0 3px;
}

.view {
  width: 24px;
  margin-right: 4px;
}

.view.on {
  background-color: #cccfd6;
}

.zoom-value {
  gap: 12px;
  width: 56px;
  margin: 0 2px;
  font-size: 13px;
}

.zoom-range {
  width: 106px;
  height: 12px;
  margin: 0 2px;
  appearance: none;
}

.zoom-range::-webkit-slider-runnable-track {
  height: 2px;
  background: linear-gradient(to right, #2b5fae 50%, #b4b7c0 50%);
}

.zoom-range::-webkit-slider-thumb {
  appearance: none;
  width: 10px;
  height: 10px;
  margin-top: -4px;
  border: 3px solid #fff;
  border-radius: 50%;
  background-color: #999;
  box-shadow: 0 0 2px rgba(0, 0, 0, 0.4);
}

/* 输入法 */
.ime {
  position: fixed;
  right: 0;
  bottom: 189px;
  display: flex;
  align-items: center;
  gap: 6px;
  height: 26px;
  padding: 0 3px 0 0;
  background-color: #fff;
  border: 1px solid #b9cde3;
}

.ime svg {
  width: 18px;
  height: 18px;
}

.ime-logo {
  width: 28px;
  height: 28px;
  border-radius: 4px;
  background-color: #ee5a24;
  color: #fff;
  font-family: Inter, sans-serif;
  font-size: 28px;
  font-weight: bold;
  line-height: 28px;
  text-align: center;
  transform: rotate(-10deg);
}

.ime-zh {
  width: 18px;
  color: #0a6ed1;
  font-size: 16px;
  font-weight: bold;
}

.edge-pill {
  position: fixed;
  right: 3px;
  bottom: 177px;
  width: 7px;
  height: 58px;
  border-radius: 4px;
  background-image: linear-gradient(#eef0f3 60%, #22b3e8 60%);
}
```
FILE: script.js
```js
const columns = "ABCDEFGHIJLMNOPQR".split("");
const titles = ["序号", "直播", "时间", "昵称", "性别", "UID", "抖音号", "荣耀等级", "内容", "MS4", "主页地址", "头像地址", "地区", "用户简介", "勋章等级", "关注", "粉丝"];

// 直播|昵称|性别|UID|抖音号|荣耀|内容|MS4|地区|简介|勋章|关注|粉丝，"^" 表示内容超过一行
const data = `
进入|用心|女|294191653506258|2187405888|8|进入直播间|hlu|北京|謝谢你的关注|8|321|140
弹幕|清风??|男|81767748431|384040066|18|发言：瘦子呢|K_2|宝鸡|^陌生的人 请给我|18||
弹幕|雨安|男|78819624156|151354268|19|发言：必是供电|n7N|鄂尔多斯|练习两年半|19||
进入|善财童子|女|59015673697|8165293|22|进入直播间|got|未知|^尘埃落定时，回忆|22|10|180
弹幕|不知名的人|男|94455521300|578006278|16|^发言：还在两个|fBe|嘉兴|用户无简介|16||
弹幕|晓雅追剧|女|99254176833|989606217|3|发言：|v_U|未知|关注不迷路！|3||
进入|??云|女|99927836773|1045023097|5|进入直播间|nAx|未知|做幸福的女主人|5|2126|270
弹幕|有李说不清|男|118708040342531|3545184800|25|发言：一个|Xzq|邵阳|用户无简介|25||
进入|^?抓兔子??的小黄|女|69502046751|921477697|50|进入直播间|uy-|未知|^未经他人苦，莫劝|50|849|60
进入|零晨|男|81196788075|161900346|12|进入直播间|x-|杭州|……|12|81|30
进入|★雪|女|70858598956|324601861|3|进入直播间|k7-|长春|^如果你的目标是月|3|274|130
进入|so.|男|914421324189591|3918168056|48|进入直播间|Tl1|未知|用户无简介|48|10|360
弹幕|小苹果??|女|63841429650|129307039|12|发言：蓝黑的|y6l|未知|用户无简介|12|274|130
进入|735|男|228220760385549|3767246683|6|进入直播间|HsR|未知|用户无简介|6|22|20
进入|?|男|103360393117|1514889804|5|进入直播间|vp5|南京|end...|5|835|20
进入|运气暴曾女士|女|99474248024|1083716695|12|进入直播间|lIt|宁德市|这里介绍不了我|12|211|240
进入|海杨|男|52429538739|182557527|22|进入直播间|PPX|咸宁|用户无简介|22|217|950
弹幕|NSSI????|男|102584727846|3847514477|0|^发言：不是你不用|Pe4|东京|^infp\\n朋友：@粥|0|835|20
进入|zb|男|352766710382877|44214210796|2|进入直播间|QYk|未知|用户无简介|2|323|20
进入|明天见·|女|144522336850204|74478389270|8|进入直播间|6N7|哈尔滨|^狗狗天下无敌！\\n|8|161|70
弹幕|我快乐呀|男|103877947813|1383800771|20|发言：西西附体了|89Q|未知|用户无简介|20|55|40
进入|董|男|100903892461|1101923115|3|进入直播间|h9O|济宁|^宁在人前全不会，|3|115|50
弹幕|慢慢|男|68117077881|364286995|20|^发言：上一把开局|cIS|贵阳|^热爱漫无边际　生|20|55|40
弹幕|一颗卷心菜|女|110872184017661|31514197298|0|^发言：哈哈哈哈哈|TPN|武汉|^白羊女??\\n中南|0|87|160
进入|L丶FEI|男|95635504226|605655709|2|进入直播间|vVm|济宁|^愿你前程似锦 再|2|121|140
进入|七欣辞|男|168932620265613|25733031358|2|进入直播间|kO6|嘉兴|闲人勿扰|2|45|10
弹幕|venus|女|92676406104|1056972344|4|发言：套装|5Pf|未知|^忠于自己，认真生|4|87|160
弹幕|烂尾的情诗.|男|64258507520|713560191|14|发言：|jMA|上海|摸鱼中|14|121|140
弹幕|彼此彼此|女|101767198354|1168020592|22|^发言：[赞][赞|Ool|咸阳|用户无简介|22|117|8
进入|弓上弦，口天下|男|104665021389|1516553095|16|进入直播间|JS3|台州|^生活不是为了赶|16|726|130
进入|小明同学|男|71609577384|141421595|2|进入直播间|WbH|未知|萌萌哒！|2||
弹幕|就在刚刚|男|102753665498|1247847468|12|发言：港口一个|3gp|未知|用户无简介|12|523|20
进入|Li不懂??呗|女|84932497832|192365698|4|进入直播间|jv8|未知|^嗨！你好！??New|4|1|110
弹幕|星许|男|82591088893|579040159|13|发言：两个|_Uq|未知|用户无简介|13|523|20
弹幕|猪可杀不可卤|男|111085817948|2026850654|1|^发言：秃子到现在|0HY|未知|用户无简介|1|523|20
礼物|久处小号|人妖|420475926219803|21423987778|0|^久处小号:送给主|C77|未知|用户无简介|1|45|10
弹幕|十一月|女|333332433050501|3530432054|19|发言：红色毛衣|GzJ|未知|用户无简介|19|531|40
弹幕|YICHEN服饰|女|756896830078040|4158410951|29|^发言：@venus 感|xHS|未知|^唯经验不可抄袭，|29||
`.trim().split("\n");

function cell(text, cls = "") {
  if (text[0] === "^") {
    text = text.slice(1);
    cls += " wrap";
  } else if (text.length === 15 && !isNaN(text)) {
    cls += " wrap";
  }
  const html = text.replace(/[\x21-\x7e]+/g, '<span class="en">$&</span>');
  return `<div class="cell ${cls}">${html}</div>`;
}

function row(n, cells) {
  const on = n === 11;
  const tds = cells.map((c, i) => `<td${on && i === 10 ? ' class="selected"' : ""}>${c}</td>`);
  return `<tr><th${on ? ' class="row-on"' : ""}>${n}</th>${tds.join("")}</tr>`;
}

document.getElementById("cols").innerHTML =
  '<col style="width: 32px">' + columns.map(() => '<col style="width: 110px">').join("");

const marker = '<span class="hidden-col"><svg class="icon left"><use href="#tri" /></svg><svg class="icon right"><use href="#tri" /></svg></span>';
document.getElementById("head").innerHTML =
  '<tr><th class="corner"></th>' +
  columns.map((c) => (c === "L" ? `<th class="col-on">${marker}L</th>` : `<th>${c}</th>`)).join("") +
  "</tr>";

const rows = data.map((line, i) => {
  const [type, name, sex, uid, id, level, content, ms4, area, intro, medal, follow, fans] = line.split("|");
  return row(i + 2, [
    cell(String(i + 1)),
    cell(type),
    cell("^2025年2月23日17"),
    cell(name),
    cell(sex),
    cell(uid),
    cell(id),
    cell(`荣誉${level}级`),
    cell(content),
    cell("^MS4wLjABAAAA" + ms4, "code"),
    cell("^https://www.dou", "code"),
    cell("^https://p26.dou", "code"),
    cell(area),
    cell(intro),
    cell(`荣誉等级${medal}级勋章`),
    cell(follow),
    cell(fans),
  ]);
});
document.getElementById("body").innerHTML = row(1, titles.map((t) => cell(t))) + rows.join("");
```
